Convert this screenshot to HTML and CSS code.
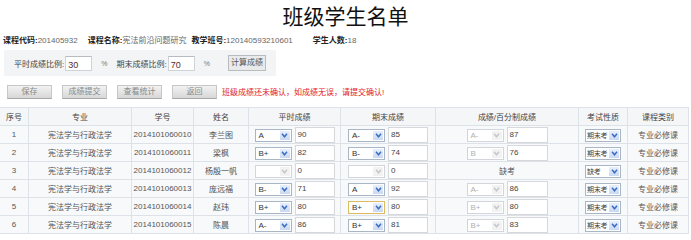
FILE: index.html
```html
<!DOCTYPE html>
<html lang="zh">
<head>
<meta charset="utf-8">
<title>班级学生名单</title>
<link rel="stylesheet" href="styles.css">
</head>
<body>
<div class="page">
  <h1 class="title">班级学生名单</h1>
  <div class="info">
    <span class="item item-code"><b>课程代码:</b>201405932</span>
    <span class="item item-name"><b>课程名称:</b>宪法前沿问题研究</span>
    <span class="item item-class"><b>教学班号:</b>120140593210601</span>
    <span class="item"><b>学生人数:</b>18</span>
  </div>
  <div class="ctrl">
    <div class="panel">
      <span class="lbl">平时成绩比例:</span>
      <span class="ratio">30</span>
      <span class="pct">%</span>
      <span class="lbl lbl2">期末成绩比例:</span>
      <span class="ratio">70</span>
      <span class="pct">%</span>
      <span class="calc">计算成绩</span>
    </div>
  </div>
  <div class="actions">
    <span class="btn">保存</span>
    <span class="btn">成绩提交</span>
    <span class="btn">查看统计</span>
    <span class="btn">返回</span>
    <span class="warn">班级成绩还未确认，如成绩无误，请提交确认!</span>
  </div>
  <table class="grid">
    <colgroup>
      <col class="c1"><col class="c2"><col class="c3"><col class="c4"><col class="c5"><col class="c6"><col class="c7"><col class="c8"><col class="c9">
    </colgroup>
    <thead>
      <tr><th>序号</th><th>专业</th><th>学号</th><th>姓名</th><th>平时成绩</th><th>期末成绩</th><th>成绩/百分制成绩</th><th>考试性质</th><th>课程类别</th></tr>
    </thead>
    <tbody>
      <tr>
        <td>1</td><td>宪法学与行政法学</td><td>2014101060010</td><td>李兰图</td>
        <td><div class="pair"><span class="sel"><span class="sv">A</span><span class="sb"><svg viewBox="0 0 8 6" width="7" height="5"><path d="M1 1 L4 4.5 L7 1" fill="none" stroke="#3a6cc4" stroke-width="1.8"/></svg></span></span><span class="inp">90</span></div></td>
        <td><div class="pair"><span class="sel"><span class="sv">A-</span><span class="sb"><svg viewBox="0 0 8 6" width="7" height="5"><path d="M1 1 L4 4.5 L7 1" fill="none" stroke="#3a6cc4" stroke-width="1.8"/></svg></span></span><span class="inp">85</span></div></td>
        <td><div class="pair"><span class="sel dis"><span class="sv">A-</span><span class="sb"><svg viewBox="0 0 8 6" width="7" height="5"><path d="M1 1 L4 4.5 L7 1" fill="none" stroke="#c4c8cc" stroke-width="1.8"/></svg></span></span><span class="inp wide">87</span></div></td>
        <td><div class="pair"><span class="sel nat"><span class="sv">期末考</span><span class="sb"><svg viewBox="0 0 8 6" width="7" height="5"><path d="M1 1 L4 4.5 L7 1" fill="none" stroke="#3a6cc4" stroke-width="1.8"/></svg></span></span></div></td>
        <td>专业必修课</td>
      </tr>
      <tr>
        <td>2</td><td>宪法学与行政法学</td><td>2014101060011</td><td>梁枫</td>
        <td><div class="pair"><span class="sel"><span class="sv">B+</span><span class="sb"><svg viewBox="0 0 8 6" width="7" height="5"><path d="M1 1 L4 4.5 L7 1" fill="none" stroke="#3a6cc4" stroke-width="1.8"/></svg></span></span><span class="inp">82</span></div></td>
        <td><div class="pair"><span class="sel"><span class="sv">B-</span><span class="sb"><svg viewBox="0 0 8 6" width="7" height="5"><path d="M1 1 L4 4.5 L7 1" fill="none" stroke="#3a6cc4" stroke-width="1.8"/></svg></span></span><span class="inp">74</span></div></td>
        <td><div class="pair"><span class="sel dis"><span class="sv">B</span><span class="sb"><svg viewBox="0 0 8 6" width="7" height="5"><path d="M1 1 L4 4.5 L7 1" fill="none" stroke="#c4c8cc" stroke-width="1.8"/></svg></span></span><span class="inp wide">76</span></div></td>
        <td><div class="pair"><span class="sel nat"><span class="sv">期末考</span><span class="sb"><svg viewBox="0 0 8 6" width="7" height="5"><path d="M1 1 L4 4.5 L7 1" fill="none" stroke="#3a6cc4" stroke-width="1.8"/></svg></span></span></div></td>
        <td>专业必修课</td>
      </tr>
      <tr>
        <td>3</td><td>宪法学与行政法学</td><td>2014101060012</td><td>杨殷一帆</td>
        <td><div class="pair"><span class="sel dis"><span class="sv"></span><span class="sb"><svg viewBox="0 0 8 6" width="7" height="5"><path d="M1 1 L4 4.5 L7 1" fill="none" stroke="#c4c8cc" stroke-width="1.8"/></svg></span></span><span class="inp">0</span></div></td>
        <td><div class="pair"><span class="sel dis"><span class="sv"></span><span class="sb"><svg viewBox="0 0 8 6" width="7" height="5"><path d="M1 1 L4 4.5 L7 1" fill="none" stroke="#c4c8cc" stroke-width="1.8"/></svg></span></span><span class="inp">0</span></div></td>
        <td>缺考</td>
        <td><div class="pair"><span class="sel nat"><span class="sv">缺考</span><span class="sb"><svg viewBox="0 0 8 6" width="7" height="5"><path d="M1 1 L4 4.5 L7 1" fill="none" stroke="#3a6cc4" stroke-width="1.8"/></svg></span></span></div></td>
        <td>专业必修课</td>
      </tr>
      <tr>
        <td>4</td><td>宪法学与行政法学</td><td>2014101060013</td><td>庞远福</td>
        <td><div class="pair"><span class="sel"><span class="sv">B-</span><span class="sb"><svg viewBox="0 0 8 6" width="7" height="5"><path d="M1 1 L4 4.5 L7 1" fill="none" stroke="#3a6cc4" stroke-width="1.8"/></svg></span></span><span class="inp">71</span></div></td>
        <td><div class="pair"><span class="sel"><span class="sv">A</span><span class="sb"><svg viewBox="0 0 8 6" width="7" height="5"><path d="M1 1 L4 4.5 L7 1" fill="none" stroke="#3a6cc4" stroke-width="1.8"/></svg></span></span><span class="inp">92</span></div></td>
        <td><div class="pair"><span class="sel dis"><span class="sv">A-</span><span class="sb"><svg viewBox="0 0 8 6" width="7" height="5"><path d="M1 1 L4 4.5 L7 1" fill="none" stroke="#c4c8cc" stroke-width="1.8"/></svg></span></span><span class="inp wide">86</span></div></td>
        <td><div class="pair"><span class="sel nat"><span class="sv">期末考</span><span class="sb"><svg viewBox="0 0 8 6" width="7" height="5"><path d="M1 1 L4 4.5 L7 1" fill="none" stroke="#3a6cc4" stroke-width="1.8"/></svg></span></span></div></td>
        <td>专业必修课</td>
      </tr>
      <tr>
        <td>5</td><td>宪法学与行政法学</td><td>2014101060014</td><td>赵玮</td>
        <td><div class="pair"><span class="sel"><span class="sv">B+</span><span class="sb"><svg viewBox="0 0 8 6" width="7" height="5"><path d="M1 1 L4 4.5 L7 1" fill="none" stroke="#3a6cc4" stroke-width="1.8"/></svg></span></span><span class="inp">80</span></div></td>
        <td><div class="pair"><span class="sel focus"><span class="sv">B+</span><span class="sb"><svg viewBox="0 0 8 6" width="7" height="5"><path d="M1 1 L4 4.5 L7 1" fill="none" stroke="#3a6cc4" stroke-width="1.8"/></svg></span></span><span class="inp">80</span></div></td>
        <td><div class="pair"><span class="sel dis"><span class="sv">B+</span><span class="sb"><svg viewBox="0 0 8 6" width="7" height="5"><path d="M1 1 L4 4.5 L7 1" fill="none" stroke="#c4c8cc" stroke-width="1.8"/></svg></span></span><span class="inp wide">80</span></div></td>
        <td><div class="pair"><span class="sel nat"><span class="sv">期末考</span><span class="sb"><svg viewBox="0 0 8 6" width="7" height="5"><path d="M1 1 L4 4.5 L7 1" fill="none" stroke="#3a6cc4" stroke-width="1.8"/></svg></span></span></div></td>
        <td>专业必修课</td>
      </tr>
      <tr>
        <td>6</td><td>宪法学与行政法学</td><td>2014101060015</td><td>陈晨</td>
        <td><div class="pair"><span class="sel"><span class="sv">A-</span><span class="sb"><svg viewBox="0 0 8 6" width="7" height="5"><path d="M1 1 L4 4.5 L7 1" fill="none" stroke="#3a6cc4" stroke-width="1.8"/></svg></span></span><span class="inp">86</span></div></td>
        <td><div class="pair"><span class="sel"><span class="sv">B+</span><span class="sb"><svg viewBox="0 0 8 6" width="7" height="5"><path d="M1 1 L4 4.5 L7 1" fill="none" stroke="#3a6cc4" stroke-width="1.8"/></svg></span></span><span class="inp">81</span></div></td>
        <td><div class="pair"><span class="sel dis"><span class="sv">B+</span><span class="sb"><svg viewBox="0 0 8 6" width="7" height="5"><path d="M1 1 L4 4.5 L7 1" fill="none" stroke="#c4c8cc" stroke-width="1.8"/></svg></span></span><span class="inp wide">83</span></div></td>
        <td><div class="pair"><span class="sel nat"><span class="sv">期末考</span><span class="sb"><svg viewBox="0 0 8 6" width="7" height="5"><path d="M1 1 L4 4.5 L7 1" fill="none" stroke="#3a6cc4" stroke-width="1.8"/></svg></span></span></div></td>
        <td>专业必修课</td>
      </tr>
    </tbody>
  </table>
</div>
</body>
</html>
```

FILE: styles.css
```css
html, body {
  margin: 0;
  padding: 0;
  background: #fff;
}

body {
  font-family: "Liberation Sans", "Noto Sans CJK SC", sans-serif;
  font-size: 8px;
  color: #555;
}

.page {
  width: 691px;
  overflow: hidden;
}

.title {
  margin: 0;
  height: 31px;
  padding-top: 1px;
  box-sizing: border-box;
  text-align: center;
  font-family: "Noto Sans CJK SC", sans-serif;
  font-weight: 400;
  font-size: 21px;
  line-height: 28px;
  color: #111;
}

.info {
  display: flex;
  height: 16px;
  align-items: center;
  padding-left: 3px;
  color: #666;
}

.info .item b {
  color: #222;
  font-weight: 700;
}

.item-code { margin-right: 10px; }
.item-name { margin-right: 5px; }
.item-class { margin-right: 20px; }

.ctrl {
  padding: 3px 0 0 4px;
  height: 31px;
  box-sizing: border-box;
}

.panel {
  display: inline-flex;
  align-items: center;
  height: 26px;
  width: 272px;
  box-sizing: border-box;
  padding-left: 10px;
  background: #f3f4f5;
  color: #444;
}

.lbl {
  margin-right: 1px;
}

.lbl2 {
  margin-left: 9px;
}

.ratio {
  display: inline-block;
  width: 27px;
  height: 15px;
  box-sizing: border-box;
  border: 1px solid #cfd3d7;
  border-top-color: #b8bcc0;
  background: #fff;
  font-size: 9px;
  line-height: 16px;
  padding-left: 2px;
  color: #5a2a2a;
}

.pct {
  margin-left: 9px;
  color: #777;
  font-size: 7px;
}

.calc {
  display: inline-block;
  margin-left: 18px;
  width: 38px;
  height: 16px;
  box-sizing: border-box;
  border: 1px solid #b9bcbf;
  background: #e9eaeb;
  text-align: center;
  line-height: 14px;
  color: #555;
}

.actions {
  display: flex;
  align-items: center;
  height: 27px;
  padding-left: 7px;
  padding-bottom: 2px;
  box-sizing: content-box;
}

.btn {
  display: inline-block;
  width: 45px;
  height: 14px;
  box-sizing: border-box;
  margin-right: 10px;
  border: 1px solid #c7c7c7;
  border-bottom-color: #a9a9a9;
  background: linear-gradient(#f2f2f2, #d7d7d7);
  text-align: center;
  line-height: 12px;
  color: #888;
}

.warn {
  margin-left: -5px;
  color: #e2202a;
}

.grid {
  border-collapse: collapse;
  table-layout: fixed;
  width: 689px;
  margin-left: -1px;
}

.c1 { width: 29px; }
.c2 { width: 103px; }
.c3 { width: 62px; }
.c4 { width: 55px; }
.c5 { width: 92px; }
.c6 { width: 95px; }
.c7 { width: 143px; }
.c8 { width: 49px; }
.c9 { width: 61px; }

.grid th,
.grid td {
  border: 1px solid #dde2e8;
  height: 17px;
  padding: 0;
  text-align: center;
  vertical-align: middle;
  white-space: nowrap;
  background: #f7f9fb;
  color: #555;
  font-weight: 400;
}

.grid th {
  color: #444;
  background: #f5f6f8;
}

.pair {
  display: flex;
  justify-content: center;
  align-items: center;
}

.sel {
  display: inline-flex;
  width: 37px;
  height: 13px;
  box-sizing: border-box;
  border: 1px solid #a9b6c6;
  background: #fff;
  margin-top: 1px;
}

.sel .sv {
  flex: 1;
  min-width: 0;
  overflow: hidden;
  padding-left: 3px;
  text-align: left;
  line-height: 11px;
  color: #333;
  white-space: nowrap;
}

.sel .sb {
  width: 10px;
  margin: 1px;
  background: linear-gradient(#e8effa, #c9d9f1);
  display: flex;
  align-items: center;
  justify-content: center;
}

.sel.dis {
  border-color: #d2d5d9;
}

.sel.dis .sv {
  color: #b0b0b0;
}

.sel.dis .sb {
  background: #f2f2f2;
}

.sel.focus {
  border-color: #dcbc63;
}

.sel.nat {
  width: 36px;
}

.sel.nat .sv {
  padding-left: 1px;
  font-size: 7px;
  letter-spacing: -0.3px;
  color: #444;
}

.inp {
  display: inline-block;
  width: 40px;
  height: 16px;
  margin-left: 3px;
  box-sizing: border-box;
  border: 1px solid #d6d8db;
  background: #fff;
  text-align: left;
  padding-left: 2px;
  line-height: 14px;
  color: #444;
}

.inp.wide {
  width: 41px;
}
```
